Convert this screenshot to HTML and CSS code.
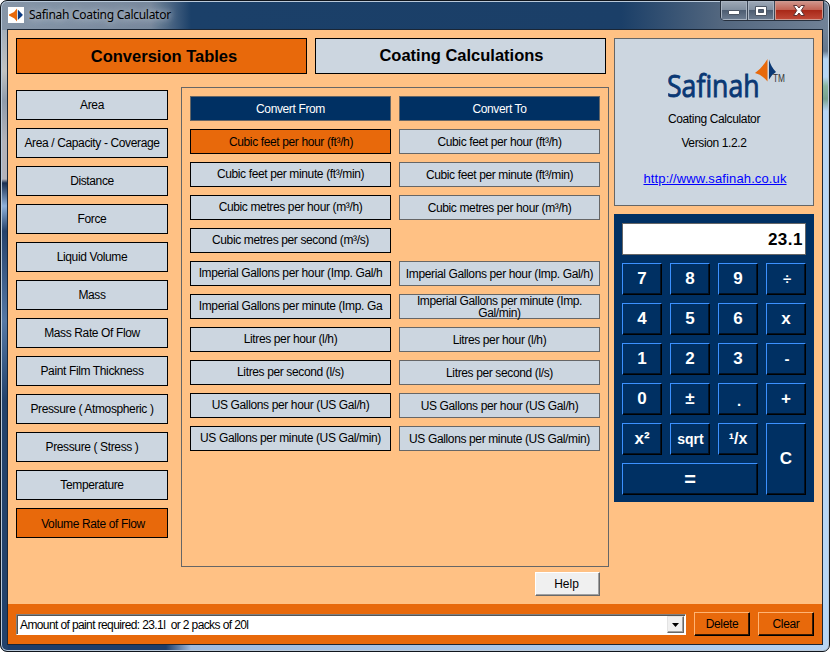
FILE: index.html
```html
<!DOCTYPE html>
<html lang="en">
  <head>
    <meta charset="utf-8" />
    <title>Safinah Coating Calculator</title>
    <link rel="stylesheet" href="styles.css" />
  </head>
  <body>
    <div class="window">
      <header class="titlebar">
        <svg class="app-icon" width="16" height="16" viewBox="0 0 16 16">
          <rect width="16" height="16" fill="#fff" />
          <path d="M9 1.500V14.500L6.500 11.500 1 8.500V7.500L6 5Z" fill="#e8690b" />
          <path d="M9.800 2.500L14.500 7.500V8.500L9.800 13Z" fill="#0b3a82" />
        </svg>
        <span class="title">Safinah Coating Calculator</span>
        <div class="controls">
          <span class="control minimize">
            <svg width="12" height="5" viewBox="0 0 12 5">
              <rect x=".5" y=".5" width="11" height="4" rx=".5" fill="#fff" stroke="#4d5664" />
            </svg>
          </span>
          <span class="control maximize">
            <svg width="12" height="10" viewBox="0 0 12 10">
              <path d="M.5 .5H11.500V9.500H.5ZM3.500 3.500V6.500H8.500V3.500Z" fill="#fff" fill-rule="evenodd" stroke="#4d5664" />
            </svg>
          </span>
          <span class="control close">
            <svg width="12" height="11" viewBox="0 0 12 11">
              <path d="M.5 .5H4L6 3 8 .5H11.500L8.200 5.500 11.500 10.500H8L6 8 4 10.500H.5L3.800 5.500Z" fill="#fff" stroke="#5c3434" />
            </svg>
          </span>
        </div>
      </header>

      <div class="client">
        <div class="content">
          <main class="main">
            <nav class="tabs">
              <button class="tab active">Conversion Tables</button>
              <button class="tab">Coating Calculations</button>
            </nav>

            <div class="tables">
              <nav class="categories">
                <button class="btn">Area</button>
                <button class="btn">Area / Capacity - Coverage</button>
                <button class="btn">Distance</button>
                <button class="btn">Force</button>
                <button class="btn">Liquid Volume</button>
                <button class="btn">Mass</button>
                <button class="btn">Mass Rate Of Flow</button>
                <button class="btn">Paint Film Thickness</button>
                <button class="btn">Pressure ( Atmospheric )</button>
                <button class="btn">Pressure ( Stress )</button>
                <button class="btn">Temperature</button>
                <button class="btn active">Volume Rate of Flow</button>
              </nav>

              <section class="units">
                <div class="unit-head">Convert From</div>
                <div class="unit-head">Convert To</div>
                <button class="btn active">Cubic feet per hour (ft³/h)</button>
                <div class="unit">Cubic feet per hour (ft³/h)</div>
                <button class="btn">Cubic feet per minute (ft³/min)</button>
                <div class="unit">Cubic feet per minute (ft³/min)</div>
                <button class="btn">Cubic metres per hour (m³/h)</button>
                <div class="unit">Cubic metres per hour (m³/h)</div>
                <button class="btn">Cubic metres per second (m³/s)</button>
                <div></div>
                <button class="btn">Imperial Gallons per hour (Imp. Gal/h</button>
                <div class="unit">Imperial Gallons per hour (Imp. Gal/h)</div>
                <button class="btn">Imperial Gallons per minute (Imp. Ga</button>
                <div class="unit wrap">Imperial Gallons per minute (Imp.<br />Gal/min)</div>
                <button class="btn">Litres per hour (l/h)</button>
                <div class="unit">Litres per hour (l/h)</div>
                <button class="btn">Litres per second (l/s)</button>
                <div class="unit">Litres per second (l/s)</div>
                <button class="btn">US Gallons per hour (US Gal/h)</button>
                <div class="unit">US Gallons per hour (US Gal/h)</div>
                <button class="btn">US Gallons per minute (US Gal/min)</button>
                <div class="unit">US Gallons per minute (US Gal/min)</div>
              </section>
            </div>

            <button class="help">Help</button>
          </main>

          <aside class="side">
            <section class="about">
              <svg class="logo" width="120" height="52" viewBox="0 0 120 52">
                <text class="logo-name" transform="translate(-1 38) scale(.86 1)">Safinah</text>
                <path d="M99.500 0V22.500Q94 15.500 87 14Q94 9 99.500 0Z" fill="#e8690b" />
                <path d="M101 .5Q103 8 108 13Q103.500 15.500 101 20.500Z" fill="#0a3874" />
                <text class="logo-tm" x="105" y="23" textLength="12" lengthAdjust="spacingAndGlyphs">TM</text>
              </svg>
              <p class="product">Coating Calculator</p>
              <p class="version">Version 1.2.2</p>
              <a class="site" href="#">http://www.safinah.co.uk</a>
            </section>

            <section class="calculator">
              <div class="display">23.1</div>
              <button class="key">7</button>
              <button class="key">8</button>
              <button class="key">9</button>
              <button class="key op">÷</button>
              <button class="key">4</button>
              <button class="key">5</button>
              <button class="key">6</button>
              <button class="key">x</button>
              <button class="key">1</button>
              <button class="key">2</button>
              <button class="key">3</button>
              <button class="key op">-</button>
              <button class="key">0</button>
              <button class="key">±</button>
              <button class="key op point">.</button>
              <button class="key">+</button>
              <button class="key">x²</button>
              <button class="key sqrt">sqrt</button>
              <button class="key inverse">¹/x</button>
              <button class="key clear">C</button>
              <button class="key equals">=</button>
            </section>
          </aside>
        </div>

        <footer class="footer">
          <div class="combo">
            <span class="combo-text">Amount of paint required: 23.1l&nbsp; or 2 packs of 20l</span>
            <span class="combo-arrow">
              <svg width="7" height="4" viewBox="0 0 7 4"><path d="M0 0H7L3.500 4Z" /></svg>
            </span>
          </div>
          <button class="action">Delete</button>
          <button class="action">Clear</button>
        </footer>
      </div>
    </div>
  </body>
</html>
```
FILE: styles.css
```css
* {
  box-sizing: border-box;
}
body {
  margin: 0;
  background: #fff;
  color: #000;
  font: 12px/14px "Liberation Sans", Arial, sans-serif;
  letter-spacing: -0.37px;
}
button {
  margin: 0;
  padding: 0;
  border-radius: 0;
  color: inherit;
  font: inherit;
  letter-spacing: inherit;
  white-space: nowrap;
}
p {
  margin: 0;
}

/* Window frame */
.window {
  display: flex;
  flex-direction: column;
  width: 830px;
  height: 652px;
  padding: 0 6px 6px;
  border: 1px solid #10151c;
  border-radius: 7px;
  overflow: hidden;
  box-shadow: inset 0 0 0 1px #b9c9da;
  background:
    linear-gradient(90deg, #8796a8 0, #77889c 150px, #1b4069 190px, #1b3f68 620px, #53677f 720px, #718297 100%) 0 0 / 100% 29px no-repeat,
    linear-gradient(#8fa0b3 0, #c0c2c2 70px, #8f9bab 100px, #b3b3ba 140px, #b3b3ba 178px, #1b2f50 182px, #8fb1da 205px, #26426b 230px, #5578a5 320px, #23426b 400px) 0 0 / 7px 100% no-repeat,
    linear-gradient(#8093a8 0, #64778d 50px, #b6d6f4 58px, #b6d6f4 76px, #89b6a0 85px, #78a18e 98px, #b7d6f5 110px, #b7d6f5 100%) 100% 0 / 7px 100% no-repeat,
    linear-gradient(90deg, #1d3d69 0, #1d3d69 165px, #9fbbdf 190px, #b5d2f2 100%);
}
.titlebar {
  display: flex;
  flex: none;
  height: 28px;
  padding-left: 1px;
}
.app-icon {
  margin-top: 6px;
}
.title {
  margin: 6px 0 0 5px;
  font: 12px/16px "Noto Sans", sans-serif;
  letter-spacing: -0.28px;
  text-shadow: 0 0 6px #b9c3ce, 0 0 8px #b9c3ce;
}
.controls {
  display: flex;
  height: 20px;
  margin-left: auto;
  margin-right: -1px;
  border: 1px solid #26303e;
  border-top: 0;
  border-radius: 0 0 5px 5px;
  overflow: hidden;
}
.control {
  display: flex;
  align-items: center;
  justify-content: center;
  width: 27px;
  border-right: 1px solid #3b4757;
  box-shadow: inset 0 0 0 1px #a9b4c2;
  background: linear-gradient(#9ea9b7 0, #8290a1 45%, #4d5d72 50%, #6e7e92);
}
.minimize {
  padding-top: 4px;
}
.close {
  width: 48px;
  border-right: 0;
  box-shadow: inset 0 0 0 1px #cf9a90;
  background: linear-gradient(#d1988e 0, #c26556 45%, #a92919 50%, #c14b39);
}

/* Client area */
.client {
  display: flex;
  flex-direction: column;
  flex: 1;
  border: 1px solid #1a2636;
  background: #ffc184;
}
.content {
  display: flex;
  flex: 1;
  padding: 8px 8px 0;
}
.main {
  display: flex;
  flex-direction: column;
  width: 593px;
}
.tabs {
  display: flex;
  gap: 8px;
}
.tab {
  width: 291px;
  height: 36px;
  padding: 0 0 2px 2px;
  border: 1px solid #000;
  background: #ccd6e0;
  font-size: 16.5px;
  font-weight: bold;
  letter-spacing: 0;
}
.tab.active {
  padding: 0 0 0 5px;
}
.tables {
  display: flex;
  gap: 13px;
  padding-top: 13px;
}
.categories {
  display: flex;
  flex-direction: column;
  gap: 8px;
  width: 152px;
  padding-top: 3px;
}
.btn {
  border: 1px solid #000;
  background: #ccd6e0;
}
.categories .btn {
  height: 30px;
}
.units .btn {
  padding-bottom: 1px;
}
.tab.active,
.btn.active {
  background: #e8690b;
}
.categories .btn.active {
  padding: 2px 0 0 2px;
}
.units .btn.active {
  padding: 1px 0 0 1px;
}
.units {
  display: grid;
  grid-template-columns: 201px 201px;
  grid-auto-rows: 25px;
  align-content: start;
  gap: 8px;
  width: 428px;
  height: 480px;
  padding: 8px;
  border: 1px solid #666;
}
.unit,
.unit-head {
  display: flex;
  align-items: center;
  justify-content: center;
  border: 1px solid #666;
  background: #ccd6e0;
  text-align: center;
  white-space: nowrap;
}
.unit {
  padding-top: 1px;
}
.unit.wrap {
  line-height: 12px;
  padding-top: 0;
}
.unit-head {
  background: #003063;
  color: #fff;
}
.help {
  align-self: flex-end;
  width: 65px;
  height: 24px;
  margin: 5px 9px 0 0;
  padding-right: 2px;
  border: 1px solid;
  border-color: #fff #696969 #696969 #fff;
  box-shadow: inset -1px -1px #a0a0a0;
  background: #f0f0f0;
  letter-spacing: 0;
}

/* Product details */
.side {
  display: flex;
  flex-direction: column;
  gap: 8px;
  width: 200px;
  margin-left: 5px;
}
.about {
  display: flex;
  flex-direction: column;
  align-items: center;
  height: 168px;
  border: 1px solid #666;
  background: #ccd6e0;
}
.logo {
  flex: none;
  margin: 20px 0 0 28px;
}
.logo-name {
  fill: #0a3874;
  stroke: #0a3874;
  stroke-width: 0.9px;
  font: 31px "Open Sans", sans-serif;
  letter-spacing: 0;
}
.logo-tm {
  fill: #333;
  font-size: 10px;
  letter-spacing: 0;
}
.product {
  margin-top: 1px;
}
.version {
  margin-top: 10px;
}
.site {
  margin-top: 21px;
  padding-left: 2px;
  color: #00f;
  font-size: 13px;
  line-height: 16px;
  letter-spacing: 0.12px;
}

/* Calculator */
.calculator {
  display: grid;
  grid-template-columns: repeat(4, 40px);
  grid-template-rows: repeat(7, 32px);
  gap: 8px;
  height: 288px;
  padding: 9px 8px 8px;
  background: #003063;
}
.display {
  grid-column: 1 / -1;
  padding: 0 2px;
  border: 1px solid #666;
  background: #fff;
  font: bold 17px/32px "Liberation Sans", Arial, sans-serif;
  letter-spacing: 0.5px;
  text-align: right;
}
.key {
  border: 1px solid;
  border-color: #3c91ff #000 #000 #3c91ff;
  box-shadow: inset -1px -1px #001226;
  background: #003063;
  color: #fff;
  font-size: 17px;
  font-weight: bold;
  letter-spacing: 0;
}
.op {
  padding-left: 2px;
  font-size: 15px;
}
.point {
  padding-top: 4px;
}
.sqrt {
  padding-left: 1px;
  font-size: 14px;
}
.inverse {
  font-size: 16px;
}
.clear {
  grid-row: 6 / 8;
  grid-column: 4;
}
.equals {
  grid-column: 1 / 4;
  font-size: 20px;
}

/* Results bar */
.footer {
  display: flex;
  gap: 8px;
  height: 40px;
  padding: 8px 8px 0;
  background: #e8690b;
}
.combo {
  display: flex;
  width: 670px;
  height: 21px;
  margin-top: 2px;
  border: 1px solid;
  border-color: #808080 #fff #fff #808080;
  box-shadow: inset 1px 1px #555;
  background: #fff;
}
.combo-text {
  flex: 1;
  padding: 3px 0 0 3px;
  letter-spacing: -0.61px;
}
.combo-arrow {
  display: flex;
  align-items: center;
  justify-content: center;
  width: 17px;
  margin: 1px;
  border: 1px solid;
  border-color: #e3e3e3 #696969 #696969 #e3e3e3;
  box-shadow: inset -1px -1px #a0a0a0;
  background: #f0f0f0;
}
.action {
  width: 56px;
  height: 24px;
  border: 1px solid;
  border-color: #ffb473 #000 #000 #ffb473;
  box-shadow: inset -1px -1px #3a1a02;
  background: #e8690b;
}
```
